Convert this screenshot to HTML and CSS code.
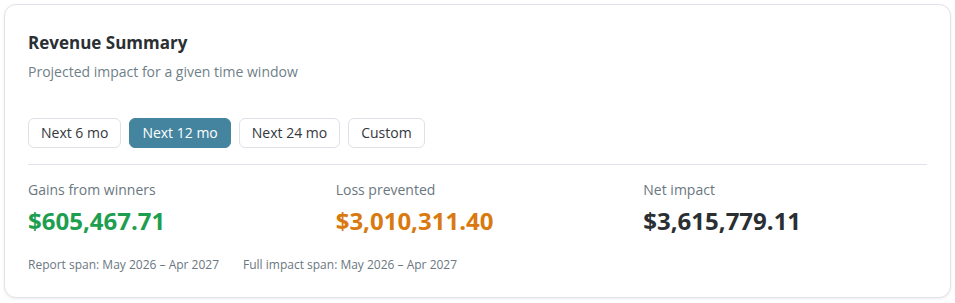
FILE: index.html
```html
<!DOCTYPE html>
<html lang="en">
<head>
<meta charset="utf-8">
<title>Revenue Summary</title>
<link rel="stylesheet" href="styles.css">
</head>
<body>
<section class="card">
  <h2 class="title">Revenue Summary</h2>
  <p class="subtitle">Projected impact for a given time window</p>
  <div class="tabs">
    <button class="tab">Next 6 mo</button>
    <button class="tab active">Next 12 mo</button>
    <button class="tab">Next 24 mo</button>
    <button class="tab">Custom</button>
  </div>
  <hr class="divider">
  <div class="stats">
    <div class="stat">
      <div class="label">Gains from winners</div>
      <div class="value green">$605,467.71</div>
    </div>
    <div class="stat">
      <div class="label">Loss prevented</div>
      <div class="value orange">$3,010,311.40</div>
    </div>
    <div class="stat">
      <div class="label">Net impact</div>
      <div class="value dark">$3,615,779.11</div>
    </div>
  </div>
  <div class="footer">
    <span>Report span: May 2026 – Apr 2027</span>
    <span>Full impact span: May 2026 – Apr 2027</span>
  </div>
</section>
</body>
</html>
```
FILE: styles.css
```css
html, body {
  margin: 0;
  padding: 0;
  background: #ffffff;
}
body {
  padding: 4px;
  font-family: "Open Sans", "Noto Sans", sans-serif;
}
.card {
  border: 1px solid #e2e2ea;
  border-radius: 12px;
  padding: 26px 23px 24px;
  box-shadow: 0 1px 3px rgba(0, 0, 0, 0.08);
  background: #fff;
}
.title {
  margin: 0;
  font-size: 17px;
  line-height: 24px;
  font-weight: 700;
  color: #2a2f33;
}
.subtitle {
  margin: 7px 0 0;
  font-size: 14px;
  line-height: 20px;
  color: #6f7f88;
}
.tabs {
  display: flex;
  gap: 8px;
  margin-top: 36px;
}
.tab {
  height: 30px;
  padding: 0 12px;
  border: 1px solid #dfe1e6;
  border-radius: 6px;
  background: #fff;
  color: #33383c;
  font-family: inherit;
  font-size: 14px;
  line-height: 28px;
}
.tab.active {
  background: #44849e;
  border-color: #44849e;
  color: #fff;
}
.divider {
  margin: 16px 0 0;
  border: 0;
  border-top: 1px solid #e2e3ea;
  height: 0;
}
.stats {
  display: grid;
  grid-template-columns: 1fr 1fr 1fr;
  gap: 24px;
  margin-top: 15px;
}
.label {
  font-size: 14px;
  line-height: 20px;
  color: #6b7780;
}
.value {
  margin-top: 6px;
  font-size: 24px;
  line-height: 30px;
  font-weight: 700;
}
.green { color: #1e9e4f; }
.orange { color: #d97a10; }
.dark { color: #2a2f33; }
.footer {
  display: flex;
  gap: 24px;
  margin-top: 21px;
  font-size: 12px;
  line-height: 16px;
  color: #6b7780;
}
```
